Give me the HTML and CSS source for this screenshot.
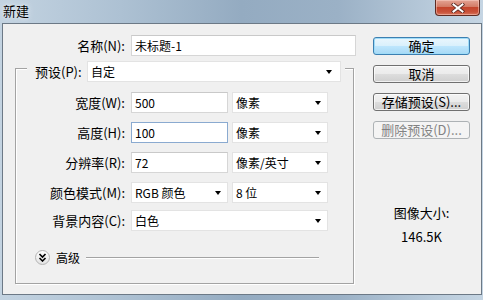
FILE: index.html
```html
<!DOCTYPE html>
<html lang="zh">
<head>
<meta charset="utf-8">
<title>新建</title>
<link rel="stylesheet" href="styles.css">
</head>
<body>
<div class="win">
  <div class="titlebar">
    <span class="title">新建</span>
    <div class="close">
      <svg width="14" height="10" viewBox="0 0 14 10"><path d="M2.5 1.5 L11.5 8.5 M11.5 1.5 L2.5 8.5" stroke="#5a2a22" stroke-width="3.6" stroke-linecap="square"/><path d="M2.5 1.5 L11.5 8.5 M11.5 1.5 L2.5 8.5" stroke="#fff" stroke-width="2" stroke-linecap="square"/></svg>
    </div>
  </div>
  <div class="client">
    <div class="main">
      <div class="row name-row">
        <span class="lbl lbl-name">名称(N):</span>
        <div class="field w-name">未标题-1</div>
      </div>
      <div class="group">
        <div class="legend">
          <span class="lbl lbl-preset">预设(P):</span>
          <div class="select w-preset"><span>自定</span><i class="arrow"></i></div>
        </div>
        <div class="rows">
          <div class="row">
            <span class="lbl">宽度(W):</span>
            <div class="field w-num">500</div>
            <div class="select w-unit"><span>像素</span><i class="arrow"></i></div>
          </div>
          <div class="row">
            <span class="lbl">高度(H):</span>
            <div class="field w-num focus">100</div>
            <div class="select w-unit"><span>像素</span><i class="arrow"></i></div>
          </div>
          <div class="row">
            <span class="lbl">分辨率(R):</span>
            <div class="field w-num">72</div>
            <div class="select w-unit"><span>像素/英寸</span><i class="arrow"></i></div>
          </div>
          <div class="row">
            <span class="lbl">颜色模式(M):</span>
            <div class="select w-num"><span>RGB 颜色</span><i class="arrow"></i></div>
            <div class="select w-unit"><span>8 位</span><i class="arrow"></i></div>
          </div>
          <div class="row row-bg">
            <span class="lbl">背景内容(C):</span>
            <div class="select w-bg"><span>白色</span><i class="arrow"></i></div>
          </div>
        </div>
        <div class="adv">
          <span class="adv-btn">
            <svg width="9" height="9" viewBox="0 0 9 9"><path d="M1.5 1 L4.5 4 L7.5 1 M1.5 5 L4.5 8 L7.5 5" fill="none" stroke="#000" stroke-width="1.6"/></svg>
          </span>
          <span class="adv-label">高级</span>
          <span class="etch"></span>
        </div>
      </div>
    </div>
    <div class="side">
      <div class="btn default">确定</div>
      <div class="btn">取消</div>
      <div class="btn">存储预设(S)...</div>
      <div class="btn disabled">删除预设(D)...</div>
      <div class="size">
        <div>图像大小:</div>
        <div class="size-val">146.5K</div>
      </div>
    </div>
  </div>
</div>
</body>
</html>
```

FILE: styles.css
```css
* { box-sizing: border-box; }
html, body { margin: 0; padding: 0; }
body {
  width: 483px;
  height: 300px;
  overflow: hidden;
  font-family: "Noto Sans CJK SC", "Noto Sans", sans-serif;
  font-size: 12px;
  color: #000;
}
.win {
  width: 483px;
  height: 300px;
  display: flex;
  flex-direction: column;
  background: linear-gradient(to right, #c3d3e1 0%, #adc1d3 25%, #94abc1 50%, #9bb1c6 70%, #b9cbdb 90%, #c5d5e3 100%);
}
.titlebar {
  height: 23px;
  display: flex;
  justify-content: space-between;
  align-items: flex-start;
  padding-left: 3px;
  padding-right: 3px;
  flex: none;
}
.title {
  font-size: 13px;
  line-height: 23px;
  margin-top: -1px;
  text-shadow: 0 0 6px #e8eef4, 0 0 3px #e8eef4;
}
.close {
  width: 45px;
  height: 16px;
  border: 1px solid #5e2b22;
  border-top: none;
  border-radius: 0 0 4px 4px;
  background: linear-gradient(#e4a494 0%, #d37b66 45%, #c4452c 50%, #c9523a 80%, #d9785f 100%);
  box-shadow: inset 0 0 0 1px rgba(255,220,210,0.45);
  display: flex;
  align-items: center;
  justify-content: center;
}
.client {
  flex: none;
  height: 272px;
  margin: 0 1px 0 2px;
  border: 1px solid #6c7986;
  background: #f0f0f0;
  display: flex;
}
.main {
  width: 370px;
  padding-left: 12px;
  padding-top: 10px;
}
.row {
  display: flex;
  align-items: center;
  height: 21px;
}
.lbl {
  width: 112px;
  text-align: right;
  padding-right: 3px;
  margin-right: 3px;
  line-height: 21px;
  font-size: 13px;
  white-space: nowrap;
}
.lbl-name { width: 113px; }
.name-row { height: 22px; }
.field {
  height: 21px;
  background: #fff;
  border: 1px solid #d6d6d6;
  border-top-color: #c9c9c9;
  padding-left: 3px;
  line-height: 19px;
  white-space: nowrap;
}
.field.focus { border-color: #8aaad0; }
.select {
  height: 21px;
  background: #fff;
  border: 1px solid #e3e3e3;
  padding-left: 3px;
  line-height: 19px;
  display: flex;
  align-items: center;
  justify-content: space-between;
  white-space: nowrap;
}
.arrow {
  width: 0;
  height: 0;
  border-left: 3px solid transparent;
  border-right: 3px solid transparent;
  border-top: 4px solid #000;
  margin-right: 6px;
}
.w-name { width: 225px; }
.w-num { width: 97px; margin-right: 4px; }
.w-unit { width: 96px; }
.w-bg { width: 197px; }
.w-preset { width: 254px; }
.w-preset .arrow { margin-right: 8px; }
.group {
  margin-top: 12px;
  width: 339px;
  height: 216px;
  border: 1px solid #a3a3a3;
  box-shadow: inset 1px 1px #fff, 1px 1px #fff;
}
.legend {
  margin-top: -8px;
  margin-left: 11px;
  width: 318px;
  height: 21px;
  background: #f0f0f0;
  display: flex;
  align-items: center;
  padding-left: 8px;
}
.lbl-preset {
  width: 52px;
  padding-right: 0;
  margin-right: 0;
  text-align: left;
}
.rows {
  margin-top: 10px;
  display: flex;
  flex-direction: column;
  gap: 9px;
}
.row-bg { margin-top: -2px; }
.adv {
  margin-top: 19px;
  margin-left: 19px;
  margin-right: 34px;
  height: 15px;
  display: flex;
  align-items: center;
}
.adv-btn {
  width: 15px;
  height: 15px;
  border-radius: 50%;
  border: 1px solid #b4b4b4;
  background: linear-gradient(#ffffff, #e2e2e2);
  display: flex;
  align-items: center;
  justify-content: center;
}
.adv-label {
  margin-left: 6px;
  line-height: 15px;
}
.etch {
  flex: 1;
  margin-left: 6px;
  height: 2px;
  border-top: 1px solid #a3a3a3;
  border-bottom: 1px solid #fff;
}
.side {
  width: 97px;
  padding-top: 13px;
  display: flex;
  flex-direction: column;
  gap: 10px;
}
.btn {
  height: 18px;
  border: 1px solid #707070;
  border-radius: 3px;
  background: linear-gradient(#f2f2f2 0%, #ebebeb 50%, #dddddd 51%, #cfcfcf 100%);
  box-shadow: inset 0 0 0 1px rgba(255,255,255,0.7);
  text-align: center;
  line-height: 16px;
  font-size: 13px;
  white-space: nowrap;
}
.btn.default {
  border-color: #3c7fb1;
  background: linear-gradient(#eaf6fd 0%, #d9f0fc 50%, #bee6fd 51%, #a7d9f5 100%);
  box-shadow: inset 0 0 0 1px #9fdcf8;
}
.btn.disabled {
  border-color: #adb2b5;
  background: #f4f4f4;
  box-shadow: none;
  color: #838383;
}
.size {
  margin-top: 56px;
  text-align: center;
  line-height: 16px;
  font-size: 13px;
}
.size-val { margin-top: 8px; }
```
